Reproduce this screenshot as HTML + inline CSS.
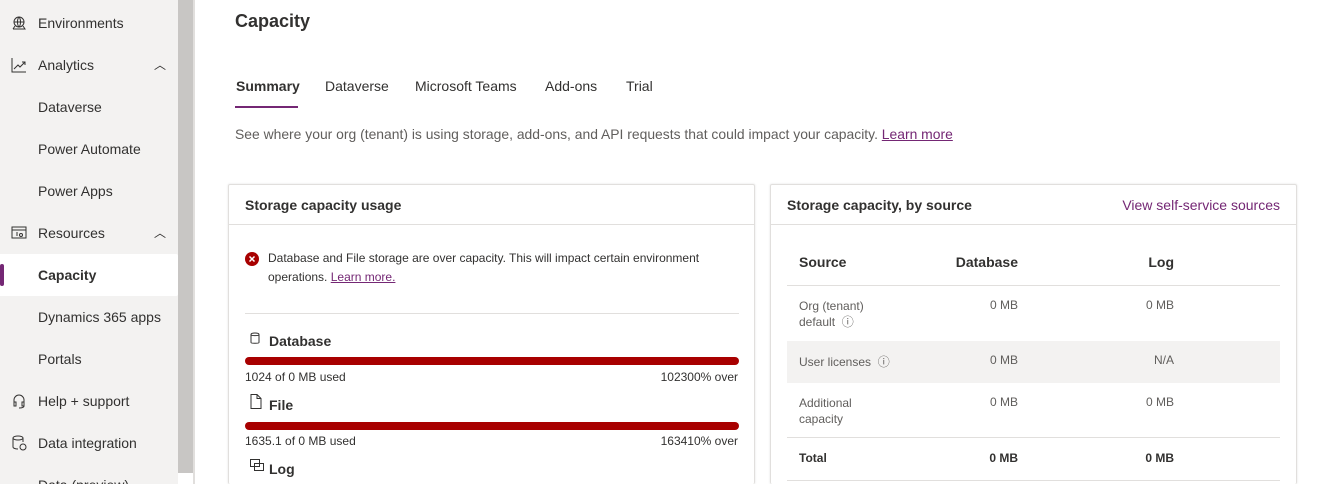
<!DOCTYPE html>
<html><head><meta charset="utf-8"><style>
*{box-sizing:border-box;margin:0;padding:0}
html{width:1332px;height:484px;overflow:hidden}
body{width:1332px;height:484px;overflow:hidden;background:#fff;font-family:"Segoe UI","Liberation Sans",sans-serif;color:#323130;position:relative}
.side{position:absolute;left:0;top:0;width:178px;height:484px;background:#f3f2f1;overflow:hidden}
.sb{position:absolute;left:178px;top:0;width:15px;height:473px;background:#c8c6c4}
.sb2{position:absolute;left:193px;top:0;width:2px;height:484px;background:#e1dfdd}
.ni{position:absolute;left:0;width:178px;height:42px;font-size:14px;line-height:42px;padding-left:38px;color:#323130}
.ni svg{position:absolute;left:11px;top:13px}
.chev{position:absolute;right:12px;top:0;font-size:12px}
.sel{background:#fff;font-weight:600;border-radius:0 2px 2px 0}
.sel:before{content:"";position:absolute;left:0;top:10px;width:4px;height:22px;background:#742774;border-radius:2px}
.abs{position:absolute}
.tab{position:absolute;top:78px;font-size:14px;color:#323130}
.card{position:absolute;top:184px;height:300px;border:1px solid #e1dfdd;border-bottom:none;border-radius:2px;box-shadow:0 0 2px rgba(0,0,0,.12)}
.ch{height:40px;border-bottom:1px solid #e1dfdd;font-size:14px;font-weight:600;line-height:40px;padding-left:16px}
.bar{position:absolute;left:16px;width:494px;height:8px;background:#a80000;border-radius:4px}
.sm{position:absolute;font-size:12px;color:#323130}
.row{position:absolute;left:16px;width:493px;border-bottom:1px solid #e1dfdd;font-size:12px;color:#605e5c}
.row span{position:absolute}
</style></head><body>
<div class="side">
<div class="ni" style="top:2px"><svg width="16" height="16" viewBox="0 0 16 16" fill="none" stroke="#323130" stroke-width="1"><circle cx="8" cy="7" r="5"/><path d="M3 7h10M8 2c-2 2-2 8 0 10M8 2c2 2 2 8 0 10M2 14h12l-2-3M4 11l-2 3"/></svg>Environments</div>
<div class="ni" style="top:44px"><svg width="16" height="16" viewBox="0 0 16 16" fill="none" stroke="#323130" stroke-width="1"><path d="M1 1v14h14M3 12l4-4 2 2 5-5M11 5h3v3"/></svg>Analytics<span class="chev">︿</span></div>
<div class="ni" style="top:86px">Dataverse</div>
<div class="ni" style="top:128px">Power Automate</div>
<div class="ni" style="top:170px">Power Apps</div>
<div class="ni" style="top:212px"><svg width="16" height="16" viewBox="0 0 16 16" fill="none" stroke="#323130" stroke-width="1"><rect x="1" y="2" width="14" height="11"/><path d="M1 5h14"/><circle cx="10" cy="10" r="1.5"/><path d="M5 8h2M5 10h2"/></svg>Resources<span class="chev">︿</span></div>
<div class="ni sel" style="top:254px">Capacity</div>
<div class="ni" style="top:296px">Dynamics 365 apps</div>
<div class="ni" style="top:338px">Portals</div>
<div class="ni" style="top:380px"><svg width="16" height="16" viewBox="0 0 16 16" fill="none" stroke="#323130" stroke-width="1"><path d="M3 9V7a5 5 0 0110 0v2M3 9h2v4H3zM11 9h2v4h-2zM13 13c0 2-3 2-5 2"/></svg>Help + support</div>
<div class="ni" style="top:422px"><svg width="16" height="16" viewBox="0 0 16 16" fill="none" stroke="#323130" stroke-width="1"><ellipse cx="7" cy="3" rx="5" ry="2"/><path d="M2 3v9c0 1 2 2 5 2M12 3v4"/><circle cx="12" cy="12" r="3"/></svg>Data integration</div>
<div class="ni" style="top:464px">Data (preview)</div>
</div>
<div class="sb"></div><div class="sb2"></div>

<div class="abs" style="left:235px;top:11px;font-size:18px;font-weight:600">Capacity</div>
<div class="tab" style="left:236px;font-weight:600">Summary</div>
<div class="abs" style="left:235px;top:106px;width:63px;height:2px;background:#742774"></div>
<div class="tab" style="left:325px">Dataverse</div>
<div class="tab" style="left:415px">Microsoft Teams</div>
<div class="tab" style="left:545px">Add-ons</div>
<div class="tab" style="left:626px">Trial</div>
<div class="abs" style="left:235px;top:126px;font-size:13.9px;color:#605e5c;white-space:nowrap">See where your org (tenant) is using storage, add-ons, and API requests that could impact your capacity. <u style="color:#742774">Learn more</u></div>

<div class="card" style="left:228px;width:527px">
<div class="ch">Storage capacity usage</div>
<svg class="abs" style="left:16px;top:67px" width="14" height="14" viewBox="0 0 14 14"><circle cx="7" cy="7" r="7" fill="#a80000"/><path d="M4.5 4.5l5 5M9.5 4.5l-5 5" stroke="#fff" stroke-width="1.5"/></svg>
<div class="sm" style="left:39px;top:64px;width:470px;line-height:19px">Database and File storage are over capacity. This will impact certain environment operations. <u style="color:#742774">Learn more.</u></div>
<div class="abs" style="left:16px;top:128px;width:494px;height:1px;background:#e1dfdd"></div>
<svg class="abs" style="left:21px;top:147px" width="10" height="13" viewBox="0 0 10 13" fill="none" stroke="#323130"><path d="M1 2.5v8c0 1 8 1 8 0v-8M1 2.5c0-2 8-2 8 0c0 1.5-8 1.5-8 0"/></svg>
<div class="abs" style="left:40px;top:148px;font-size:14px;font-weight:600">Database</div>
<div class="bar" style="top:172px"></div>
<div class="sm" style="left:16px;top:185px">1024 of 0 MB used</div>
<div class="sm" style="right:16px;top:185px">102300% over</div>
<svg class="abs" style="left:21px;top:209px" width="12" height="15" viewBox="0 0 12 15" fill="none" stroke="#323130"><path d="M1 .5h6l4 4v10H1zM7 .5v4h4"/></svg>
<div class="abs" style="left:40px;top:212px;font-size:14px;font-weight:600">File</div>
<div class="bar" style="top:237px"></div>
<div class="sm" style="left:16px;top:249px">1635.1 of 0 MB used</div>
<div class="sm" style="right:16px;top:249px">163410% over</div>
<svg class="abs" style="left:21px;top:274px" width="15" height="13" viewBox="0 0 15 13" fill="none" stroke="#323130"><rect x=".5" y=".5" width="9" height="7"/><rect x="4.5" y="4.5" width="9" height="7"/></svg>
<div class="abs" style="left:40px;top:276px;font-size:14px;font-weight:600">Log</div>
</div>

<div class="card" style="left:770px;width:527px">
<div class="ch">Storage capacity, by source<span style="position:absolute;right:16px;font-weight:400;color:#742774">View self-service sources</span></div>
<div class="row" style="top:54px;height:47px;font-size:14px;font-weight:600;color:#323130"><span style="left:12px;top:15px">Source</span><span style="right:262px;top:15px">Database</span><span style="right:106px;top:15px">Log</span></div>
<div class="row" style="top:101px;height:55px;border:none"><span style="left:12px;top:12px;line-height:16px">Org (tenant)<br>default &nbsp;ⓘ</span><span style="right:262px;top:12px">0 MB</span><span style="right:106px;top:12px">0 MB</span></div>
<div class="row" style="top:156px;height:42px;background:#f3f2f1;border:none"><span style="left:12px;top:12px">User licenses &nbsp;ⓘ</span><span style="right:262px;top:12px">0 MB</span><span style="right:106px;top:12px">N/A</span></div>
<div class="row" style="top:198px;height:55px"><span style="left:12px;top:12px;line-height:16px">Additional<br>capacity</span><span style="right:262px;top:12px">0 MB</span><span style="right:106px;top:12px">0 MB</span></div>
<div class="row" style="top:253px;height:43px;font-weight:600;color:#323130"><span style="left:12px;top:13px">Total</span><span style="right:262px;top:13px">0 MB</span><span style="right:106px;top:13px">0 MB</span></div>
</div>
</body></html>
